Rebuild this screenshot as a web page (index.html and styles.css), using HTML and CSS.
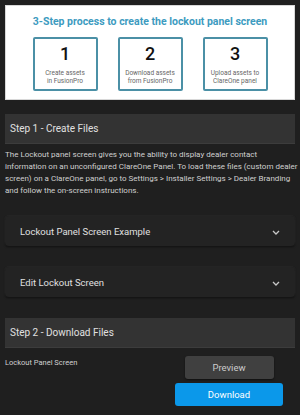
FILE: index.html
```html
<!DOCTYPE html>
<html>
<head>
<meta charset="utf-8">
<link rel="stylesheet" href="styles.css">
</head>
<body>
<div class="page">
  <section class="hero">
    <h1 class="hero-title">3-Step process to create the lockout panel screen</h1>
    <div class="steps">
      <div class="step-card"><div class="step-num">1</div><div class="step-text">Create assets<br>in FusionPro</div></div>
      <div class="step-card"><div class="step-num">2</div><div class="step-text">Download assets<br>from FusionPro</div></div>
      <div class="step-card"><div class="step-num">3</div><div class="step-text">Upload assets to<br>ClareOne panel</div></div>
    </div>
  </section>

  <h2 class="section-head first">Step 1 - Create Files</h2>
  <p class="desc">The Lockout panel screen gives you the ability to display dealer contact information on an unconfigured ClareOne Panel. To load these files (custom dealer screen) on a ClareOne panel, go to Settings &gt; Installer Settings &gt; Dealer Branding and follow the on-screen instructions.</p>

  <div class="accordion">
    <span>Lockout Panel Screen Example</span>
    <svg class="chev" width="8" height="5" viewBox="0 0 8 5"><path d="M1 1 L4 4 L7 1" fill="none" stroke="#c8c8c8" stroke-width="1.3"/></svg>
  </div>
  <div class="accordion">
    <span>Edit Lockout Screen</span>
    <svg class="chev" width="8" height="5" viewBox="0 0 8 5"><path d="M1 1 L4 4 L7 1" fill="none" stroke="#c8c8c8" stroke-width="1.3"/></svg>
  </div>

  <h2 class="section-head">Step 2 - Download Files</h2>
  <div class="file-row">
    <div class="file-name">Lockout Panel Screen</div>
    <div class="btns">
      <button class="btn btn-preview">Preview</button>
      <button class="btn btn-download">Download</button>
    </div>
  </div>
</div>
</body>
</html>
```
FILE: styles.css
```css
html, body {
  margin: 0;
  padding: 0;
  background: #1f1f1f;
  font-family: Roboto, "Liberation Sans", sans-serif;
}
.page {
  padding: 5px 5px 0 5px;
}
.hero {
  background: #fff;
  height: 95px;
  box-sizing: border-box;
  padding-top: 10px;
  border: 1px solid #d8d8d8;
}
.hero-title {
  margin: 0;
  text-align: center;
  font-size: 10.5px;
  font-weight: 700;
  color: #3d9bbf;
  line-height: 12px;
}
.steps {
  display: flex;
  justify-content: center;
  gap: 20px;
  margin-top: 9px;
}
.step-card {
  width: 65px;
  height: 54px;
  box-sizing: border-box;
  border: 2px solid #4b90a6;
  border-radius: 2px;
  text-align: center;
  padding-top: 5px;
}
.step-num {
  font-size: 18px;
  line-height: 20px;
  font-weight: 500;
  color: #111;
}
.step-text {
  margin-top: 5px;
  font-size: 6.5px;
  line-height: 8px;
  color: #666;
}
.section-head {
  margin: 0;
  background: #333333;
  height: 29px;
  line-height: 29px;
  padding-left: 5px;
  font-size: 10px;
  font-weight: 400;
  color: #e0e0e0;
  box-shadow: 0 1px 0 #3c3c3c;
}
.section-head.first {
  margin-top: 14px;
}
.desc {
  margin: 6px -5px 0 0;
  font-size: 8px;
  line-height: 12px;
  color: #cfcfcf;
}
.accordion {
  margin-top: 19px;
  height: 30px;
  background: #232323;
  border-radius: 4px;
  box-shadow: 0 1px 2px rgba(0,0,0,0.6), 0 0 0 1px #262626;
  display: flex;
  align-items: center;
  justify-content: space-between;
  padding: 0 15px 0 15px;
  font-size: 9.5px;
  color: #e0e0e0;
}
.accordion + .accordion {
  margin-top: 21px;
}
.chev {
  margin-top: 3px;
}
.accordion + .section-head {
  margin-top: 21px;
}
.file-row {
  display: flex;
  justify-content: space-between;
  margin-top: 9px;
  padding-right: 12px;
}
.file-name {
  font-size: 7.5px;
  color: #d0d0d0;
  line-height: 10px;
  margin-top: 2px;
}
.btns {
  width: 108px;
  display: flex;
  flex-direction: column;
  align-items: center;
  gap: 4px;
}
.btn {
  border: none;
  font-family: Roboto, "Liberation Sans", sans-serif;
  font-size: 9.5px;
  border-radius: 3px;
  height: 23px;
  padding: 0;
}
.btn-preview {
  width: 89px;
  background: #404040;
  color: #cccccc;
  box-shadow: 0 1px 2px rgba(0,0,0,0.5);
}
.btn-download {
  width: 108px;
  background: #0b98ea;
  color: #ffffff;
}
```
